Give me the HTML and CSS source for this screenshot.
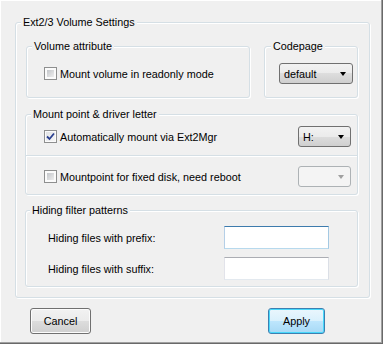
FILE: index.html
```html
<!DOCTYPE html>
<html lang="en">
<head>
    <meta charset="UTF-8">
    <meta name="viewport" content="width=device-width, initial-scale=1.0">
    <link rel="stylesheet" href="styles.css">
</head>
<body>
    <div class="dialog">
        <div class="group outer">
            <div class="group-title">Ext2/3 Volume Settings</div>

            <div class="top-row">
                <div class="group volume">
                    <div class="group-title">Volume attribute</div>
                    <label class="check-row">
                        <span class="check"></span>
                        Mount volume in readonly mode
                    </label>
                </div>
                <div class="group codepage">
                    <div class="group-title">Codepage</div>
                    <div class="combo codepage-combo">
                        <span>default</span>
                        <span class="arrow"></span>
                    </div>
                </div>
            </div>

            <div class="group mount">
                <div class="group-title">Mount point &amp; driver letter</div>
                <div class="mount-row first">
                    <label class="check-row">
                        <span class="check checked">
                            <svg width="9" height="9" viewBox="0 0 9 9"><path d="M1 4.5 L3.5 7 L8 1.5" fill="none" stroke="#2a3f8f" stroke-width="1.8"/></svg>
                        </span>
                        Automatically mount via Ext2Mgr
                    </label>
                    <div class="combo drive-combo">
                        <span>H:</span>
                        <span class="arrow"></span>
                    </div>
                </div>
                <div class="divider"></div>
                <div class="mount-row second">
                    <label class="check-row">
                        <span class="check"></span>
                        Mountpoint for fixed disk, need reboot
                    </label>
                    <div class="combo drive-combo disabled">
                        <span></span>
                        <span class="arrow"></span>
                    </div>
                </div>
            </div>

            <div class="group hiding">
                <div class="group-title">Hiding filter patterns</div>
                <div class="field-row prefix">
                    <span class="field-label">Hiding files with prefix:</span>
                    <input type="text" class="text-box focus">
                </div>
                <div class="field-row suffix">
                    <span class="field-label">Hiding files with suffix:</span>
                    <input type="text" class="text-box">
                </div>
            </div>
        </div>

        <div class="buttons">
            <button class="btn cancel">Cancel</button>
            <button class="btn apply">Apply</button>
        </div>
    </div>
</body>
</html>
```

FILE: styles.css
```css
* {
    box-sizing: border-box;
}

body {
    margin: 0;
    background-color: #f0f0f0;
    font-family: "Liberation Sans", Arial, sans-serif;
    font-size: 10.8px;
    color: #000;
}

.dialog {
    width: 383px;
    height: 344px;
    padding-top: 22px;
    background-color: #f0f0f0;
    box-shadow: inset -1px -1px 0 #696969, inset -2px -2px 0 #a0a0a0, inset 1px 1px 0 #fff;
}

.group {
    border: 1px solid #d5dfe5;
    border-radius: 3px;
    box-shadow: inset 1px 1px 0 #fff, 1px 1px 0 #fff;
}

.group-title {
    width: fit-content;
    height: 13px;
    line-height: 13px;
    margin-top: -7px;
    margin-left: 5px;
    padding: 0 2px;
    background-color: #f0f0f0;
    white-space: nowrap;
}

.outer {
    width: 355px;
    height: 276px;
    margin-left: 15px;
}

.top-row {
    display: flex;
    gap: 14px;
    margin-top: 17px;
    margin-left: 10px;
}

.volume {
    width: 224px;
    height: 52px;
}

.volume .check-row {
    margin-top: 14px;
    margin-left: 17px;
}

.codepage {
    width: 94px;
    height: 52px;
}

.codepage .group-title {
    margin-left: 6px;
}

.codepage-combo {
    width: 74px;
    margin-top: 10px;
    margin-left: 14px;
}

.check-row {
    display: flex;
    align-items: center;
    gap: 3px;
    height: 13px;
    white-space: nowrap;
}

.check {
    display: flex;
    align-items: center;
    justify-content: center;
    width: 13px;
    height: 13px;
    border: 1px solid #8e8f8f;
    background: linear-gradient(135deg, #c3c6ca, #eeeeee) content-box, #fbfbfb;
    padding: 2px;
}

.check.checked {
    padding: 0;
    background: linear-gradient(135deg, #dfe1e4, #f7f7f7);
    box-shadow: inset 0 0 0 1px #fbfbfb;
}

.combo {
    display: flex;
    align-items: center;
    justify-content: space-between;
    height: 21px;
    padding: 0 6px 0 4px;
    border: 1px solid #707070;
    border-radius: 3px;
    background: linear-gradient(#f2f2f2 0%, #ebebeb 50%, #dddddd 50%, #cfcfcf 100%);
}

.arrow {
    width: 0;
    height: 0;
    border-left: 3.5px solid transparent;
    border-right: 3.5px solid transparent;
    border-top: 4px solid #000;
}

.combo.disabled {
    border-color: #adb2b5;
    background: #f4f4f4;
}

.combo.disabled .arrow {
    border-top-color: #a0a0a0;
}

.mount {
    width: 333px;
    height: 81px;
    margin-top: 16px;
    margin-left: 9px;
}

.mount .group-title {
    margin-left: 5px;
}

.mount-row {
    display: flex;
    align-items: center;
    justify-content: space-between;
    padding-left: 18px;
    padding-right: 6px;
}

.mount-row.first {
    padding-top: 5px;
    padding-bottom: 8px;
}

.mount-row.second {
    padding-top: 10px;
}

.drive-combo {
    width: 53px;
}

.divider {
    height: 1px;
    background-color: #d5dfe5;
    box-shadow: 0 1px 0 #fff;
}

.hiding {
    width: 333px;
    height: 77px;
    margin-top: 15px;
    margin-left: 9px;
}

.hiding .group-title {
    margin-left: 4px;
}

.field-row {
    display: flex;
    align-items: center;
    justify-content: space-between;
    padding-left: 22px;
    padding-right: 28px;
}

.field-row.prefix {
    margin-top: 9px;
}

.field-row.suffix {
    margin-top: 8px;
}

.text-box {
    width: 105px;
    height: 23px;
    margin: 0;
    border: 1px solid #abadb3;
    border-color: #abadb3 #dbdfe6 #e3e9ef #e2e3ea;
    background-color: #fff;
    outline: none;
}

.text-box.focus {
    border-color: #3d7bad #a4c9e3 #b7d9ed #b5cfe7;
}

.buttons {
    display: flex;
    justify-content: space-between;
    margin-top: 10px;
    padding-left: 30px;
    padding-right: 58px;
}

.btn {
    height: 26px;
    padding: 0;
    border: 1px solid #707070;
    border-radius: 3px;
    font-family: "Liberation Sans", Arial, sans-serif;
    font-size: 10.8px;
    color: #000;
    background: linear-gradient(#f2f2f2 0%, #ebebeb 50%, #dddddd 50%, #cfcfcf 100%);
    box-shadow: inset 0 0 0 1px #fcfcfc;
}

.cancel {
    width: 61px;
}

.apply {
    width: 57px;
    border-color: #3c7fb1;
    background: linear-gradient(#eaf6fd 0%, #d9f0fc 50%, #bee6fd 50%, #a7d9f5 100%);
    box-shadow: inset 0 0 0 1px #48d8fb;
}
```
